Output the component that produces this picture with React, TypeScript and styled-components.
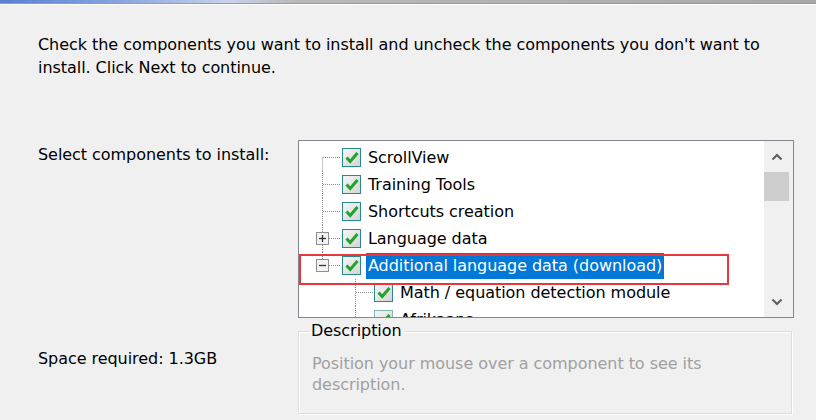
import styled, { createGlobalStyle } from "styled-components";

const GlobalStyle = createGlobalStyle`
  html, body {
    margin: 0;
    padding: 0;
    background: #f0f0f0;
  }
  body {
    font-family: "DejaVu Sans", "Liberation Sans", sans-serif;
  }
`;

const Page = styled.div`
  width: 816px;
  height: 420px;
  overflow: hidden;
  background: #f0f0f0;
  color: #000;
  font-size: 16px;
  letter-spacing: -0.05px;
`;

const TopStrip = styled.div`
  height: 3px;
  background: linear-gradient(to right, #5b7fd2 0%, #8aa6e0 15%, #c8d3ea 28%, #b9b9b9 36%, #a8a8a8 100%);
  border-bottom: 1px solid #9a9a9a;
  box-shadow: 0 1px 0 #ffffff;
`;

const Intro = styled.p`
  margin: 0;
  padding: 29px 30px 0 38px;
  line-height: 23px;
`;

const Body = styled.div`
  display: grid;
  grid-template-columns: 260px 496px;
  grid-template-rows: 178px auto;
  row-gap: 5px;
  padding: 61px 0 0 38px;
`;

const SideLabel = styled.div<{ $top: number }>`
  padding-top: ${(p) => p.$top}px;
  line-height: 20px;
`;

const TreeBox = styled.div`
  border: 1px solid #828790;
  background: #fff;
  display: flex;
  overflow: hidden;
  position: relative;
`;

const TreeList = styled.div`
  flex: 1;
  padding-top: 3px;
  overflow: hidden;
`;

const Row = styled.div`
  display: flex;
  align-items: center;
  height: 27px;
  white-space: nowrap;
`;

const Label = styled.span<{ $selected?: boolean }>`
  margin-left: 5px;
  padding: 0 2px 0 2px;
  line-height: 26px;
  height: 26px;
  background: ${(p) => (p.$selected ? "#0078d7" : "transparent")};
  color: ${(p) => (p.$selected ? "#fff" : "#000")};
`;

const Box = styled.span<{ $dim?: boolean }>`
  width: 17px;
  height: 17px;
  border: 1.5px solid ${(p) => (p.$dim ? "#7fb5b5" : "#2a8a8a")};
  background: linear-gradient(135deg, #f6f6f6 0%, #e2e2e2 60%, #d4d4d4 100%);
  display: inline-flex;
  align-items: center;
  justify-content: center;
  flex: none;
`;

const Highlight = styled.div`
  position: absolute;
  left: 0px;
  top: 113px;
  width: 426px;
  height: 27px;
  border: 2px solid #e8383d;
  pointer-events: none;
`;

const ScrollBar = styled.div`
  width: 29px;
  background: #f0f0f0;
  display: flex;
  flex-direction: column;
  align-items: flex-start;
  flex: none;
`;

const Arrow = styled.div`
  width: 25px;
  height: 31px;
  display: flex;
  align-items: center;
  justify-content: center;
  flex: none;
`;

const Thumb = styled.div`
  width: 25px;
  height: 29px;
  background: #cdcdcd;
  flex: none;
`;

const Spacer = styled.div`
  flex: 1;
`;

const Group = styled.fieldset`
  margin: 0;
  padding: 14px 13px 10px 13px;
  border: 1px solid #dcdcdc;
  box-shadow: inset 1px 1px 0 #fff, 1px 1px 0 #fff;
  width: 466px;
  height: 65px;
  box-sizing: content-box;
  line-height: 21px;
`;

const Legend = styled.legend`
  padding: 0 3px 0 1px;
  margin-left: -2px;
  line-height: 16px;
`;

const Hint = styled.div`
  color: #a0a0a0;
`;

const Check = () => (
  <svg width="14" height="13" viewBox="0 0 14 13">
    <path d="M1.5 6.5 L5.2 10.5 L12.5 2" fill="none" stroke="#21a32c" strokeWidth="3" strokeLinejoin="miter" />
  </svg>
);

type Conn = "first" | "mid" | "plus" | "minus";

const dot = "#8c8c8c";

const Connector = ({ kind }: { kind: Conn }) => (
  <svg width="43" height="27" viewBox="0 0 43 27" style={{ flex: "none" }}>
    {kind !== "minus" && kind !== "plus" && (
      <line x1="23.5" y1={kind === "first" ? 13.5 : 0} x2="23.5" y2="27" stroke={dot} strokeDasharray="1 1" />
    )}
    {kind === "plus" && (
      <>
        <line x1="23.5" y1="0" x2="23.5" y2="7" stroke={dot} strokeDasharray="1 1" />
        <line x1="23.5" y1="20" x2="23.5" y2="27" stroke={dot} strokeDasharray="1 1" />
      </>
    )}
    {kind === "minus" && <line x1="23.5" y1="0" x2="23.5" y2="7" stroke={dot} strokeDasharray="1 1" />}
    <line x1={kind === "plus" || kind === "minus" ? 30 : 24} y1="13.5" x2="42" y2="13.5" stroke={dot} strokeDasharray="1 1" />
    {(kind === "plus" || kind === "minus") && (
      <>
        <rect x="17.5" y="7.5" width="12" height="12" fill="#f3f3f3" stroke="#8e8e8e" />
        <line x1="20" y1="13.5" x2="27" y2="13.5" stroke="#333" strokeWidth="1.3" />
        {kind === "plus" && <line x1="23.5" y1="10" x2="23.5" y2="17" stroke="#333" strokeWidth="1.3" />}
      </>
    )}
  </svg>
);

const SubConnector = ({ last }: { last?: boolean }) => (
  <svg width="75" height="27" viewBox="0 0 75 27" style={{ flex: "none" }}>
    <line x1="56.5" y1="0" x2="56.5" y2={last ? 13.5 : 27} stroke={dot} strokeDasharray="1 1" />
    <line x1="57" y1="13.5" x2="74" y2="13.5" stroke={dot} strokeDasharray="1 1" />
  </svg>
);

const Item = ({ conn, text, selected }: { conn: Conn; text: string; selected?: boolean }) => (
  <Row>
    <Connector kind={conn} />
    <Box>
      <Check />
    </Box>
    <Label $selected={selected}>{text}</Label>
  </Row>
);

const SubItem = ({ text, dim }: { text: string; dim?: boolean }) => (
  <Row>
    <SubConnector />
    <Box $dim={dim}>
      <Check />
    </Box>
    <Label>{text}</Label>
  </Row>
);

const ChevronUp = () => (
  <svg width="12" height="8" viewBox="0 0 12 8">
    <path d="M1.5 6.5 L6 2 L10.5 6.5" fill="none" stroke="#606060" strokeWidth="2.2" />
  </svg>
);

const ChevronDown = () => (
  <svg width="12" height="8" viewBox="0 0 12 8">
    <path d="M1.5 1.5 L6 6 L10.5 1.5" fill="none" stroke="#606060" strokeWidth="2.2" />
  </svg>
);

export default function App() {
  return (
    <>
      <GlobalStyle />
      <Page>
        <TopStrip />
        <Intro>
          Check the components you want to install and uncheck the components you don't want to install. Click
          Next to continue.
        </Intro>
        <Body>
          <SideLabel $top={5}>Select components to install:</SideLabel>
          <TreeBox>
            <TreeList>
              <Item conn="first" text="ScrollView" />
              <Item conn="mid" text="Training Tools" />
              <Item conn="mid" text="Shortcuts creation" />
              <Item conn="plus" text="Language data" />
              <Item conn="minus" text="Additional language data (download)" selected />
              <SubItem text="Math / equation detection module" />
              <SubItem text="Afrikaans" dim />
            </TreeList>
            <ScrollBar>
              <Arrow>
                <ChevronUp />
              </Arrow>
              <Thumb />
              <Spacer />
              <Arrow>
                <ChevronDown />
              </Arrow>
            </ScrollBar>
            <Highlight />
          </TreeBox>
          <SideLabel $top={26}>Space required: 1.3GB</SideLabel>
          <Group>
            <Legend>Description</Legend>
            <Hint>
              Position your mouse over a component to see its
              <br />
              description.
            </Hint>
          </Group>
        </Body>
      </Page>
    </>
  );
}
